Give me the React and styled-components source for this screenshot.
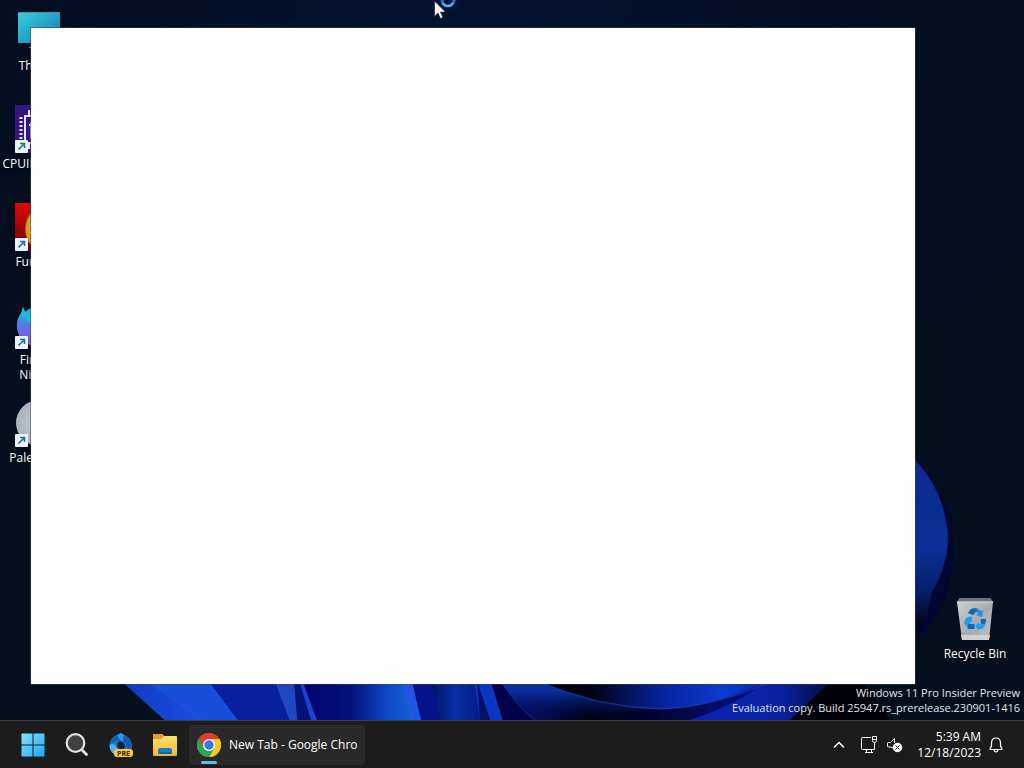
import React from "react";
import styled, { createGlobalStyle } from "styled-components";

const GlobalStyle = createGlobalStyle`
  * {
    box-sizing: border-box;
  }
  body {
    margin: 0;
    overflow: hidden;
    background: #020b1a;
    color: #fff;
    font-family: "Open Sans", "Noto Sans", sans-serif;
    font-size: 12px;
  }
  button {
    font: inherit;
    color: inherit;
    padding: 0;
    border: none;
    background: none;
  }
  svg {
    display: block;
    flex: none;
  }
`;

const StyledScreen = styled.div`
  display: flex;
  flex-direction: column;
  height: 100vh;
`;

const StyledDesktop = styled.main`
  position: relative;
  display: flex;
  flex: 1;
  justify-content: space-between;
  min-height: 0;
  padding: 7px 10px 27px 0;
  overflow: hidden;
  .wallpaper {
    position: absolute;
    inset: 0;
    width: 100%;
    height: 100%;
  }
`;

const StyledShortcuts = styled.div`
  position: relative;
  display: flex;
  flex-direction: column;
  justify-content: ${({ $end }) => ($end ? "flex-end" : "flex-start")};
`;

const StyledShortcut = styled.button`
  display: flex;
  flex-direction: column;
  align-items: center;
  width: 78px;
  height: 98px;
  text-shadow: 0 1px 2px #000;
  .label {
    margin-top: 3px;
    line-height: 15px;
  }
`;

const StyledWindow = styled.section`
  position: absolute;
  inset: 28px 109px 36px 31px;
  background: #fff;
  box-shadow: 0 0 0 1px rgba(60, 64, 72, 0.5);
`;

const StyledWatermark = styled.div`
  position: absolute;
  right: 4px;
  bottom: 5px;
  font-size: 11px;
  line-height: 15px;
  text-align: right;
  color: #e2e5ea;
`;

const StyledPointer = styled.svg`
  position: absolute;
  top: 0;
  left: 434px;
`;

const StyledTaskbar = styled.footer`
  display: flex;
  flex: none;
  align-items: center;
  justify-content: space-between;
  height: 48px;
  padding: 0 21px 0 11px;
  border-top: 1px solid #3b3d42;
  background: #1c1c1c;
`;

const StyledGroup = styled.div`
  display: flex;
  align-items: center;
`;

const StyledTaskButton = styled.button`
  display: flex;
  align-items: center;
  justify-content: center;
  width: 44px;
  height: 40px;
`;

const StyledAppButton = styled.button`
  position: relative;
  display: flex;
  align-items: center;
  gap: 8px;
  width: 176px;
  height: 40px;
  margin-left: 2px;
  padding: 0 8px;
  border-radius: 4px;
  background: #292929;
  .title {
    flex: 1;
    overflow: hidden;
    white-space: nowrap;
    text-align: left;
  }
  &::after {
    content: "";
    position: absolute;
    bottom: 1px;
    left: 12px;
    width: 16px;
    height: 3px;
    border-radius: 2px;
    background: #60b8f0;
  }
`;

const StyledTrayButton = styled.button`
  display: flex;
  align-items: center;
  justify-content: center;
  width: 25px;
  height: 40px;
  margin-right: ${({ $spaced }) => ($spaced ? "6px" : "0")};
`;

const StyledClock = styled.button`
  margin: 0 8px 0 10px;
  line-height: 16px;
  text-align: right;
`;

const Wallpaper = () => (
  <svg
    className="wallpaper"
    viewBox="0 0 1024 720"
    preserveAspectRatio="xMidYMax slice"
    aria-hidden="true"
  >
    <defs>
      <radialGradient id="sky" cx="0.45" cy="0" r="0.8">
        <stop offset="0" stopColor="#031230" />
        <stop offset="0.6" stopColor="#020d20" />
        <stop offset="1" stopColor="#030f1e" />
      </radialGradient>
      <linearGradient id="edge" x1="0" x2="0" y1="0" y2="1">
        <stop offset="0" stopColor="#0a2a8e" />
        <stop offset="0.45" stopColor="#0b2f96" />
        <stop offset="0.62" stopColor="#081f6e" />
        <stop offset="0.76" stopColor="#020620" />
        <stop offset="1" stopColor="#01020e" />
      </linearGradient>
      <linearGradient id="petal" x1="0" x2="1">
        <stop offset="0" stopColor="#1238c4" />
        <stop offset="1" stopColor="#1a50e2" />
      </linearGradient>
      <linearGradient id="glow" x1="0" x2="1">
        <stop offset="0" stopColor="#020272" />
        <stop offset="0.4" stopColor="#04127c" />
        <stop offset="0.7" stopColor="#1048c8" />
        <stop offset="1" stopColor="#166be4" />
      </linearGradient>
      <linearGradient id="mid" x1="0" x2="1">
        <stop offset="0" stopColor="#041064" />
        <stop offset="0.5" stopColor="#0830a6" />
        <stop offset="1" stopColor="#041a86" />
      </linearGradient>
      <linearGradient id="wave" x1="0" x2="1">
        <stop offset="0" stopColor="#000108" />
        <stop offset="0.25" stopColor="#010318" />
        <stop offset="0.55" stopColor="#0723a0" />
        <stop offset="0.8" stopColor="#0b3bd0" />
        <stop offset="1" stopColor="#0726ac" />
      </linearGradient>
      <linearGradient id="under" x1="0" x2="1">
        <stop offset="0" stopColor="#020c5c" />
        <stop offset="0.2" stopColor="#01031c" />
        <stop offset="0.45" stopColor="#01042c" />
        <stop offset="0.7" stopColor="#040c66" />
        <stop offset="1" stopColor="#0518a0" />
      </linearGradient>
      <linearGradient id="curl" x1="0" x2="0" y1="0" y2="1">
        <stop offset="0.3" stopColor="#0a2c9c" />
        <stop offset="1" stopColor="#030c50" stopOpacity="0" />
      </linearGradient>
      <linearGradient id="tail" x1="0" x2="1">
        <stop offset="0" stopColor="#0a24b4" />
        <stop offset="0.6" stopColor="#0a22a0" />
        <stop offset="1" stopColor="#020828" />
      </linearGradient>
    </defs>
    <rect width="1024" height="720" fill="url(#sky)" />
    <path d="M860 430Q930 448 951 520Q962 600 915 642L860 690Z" fill="#010730" />
    <path d="M860 440Q900 448 915 460Q946 492 948 540Q946 570 932 592Q926 625 915 638L860 680Z" fill="url(#edge)" />
    <path d="M120 680L165 720H870L850 680Z" fill="#04117a" />
    <path d="M121 680L165 720H205L146 680Z" fill="url(#petal)" />
    <path d="M146 680L203 720H238L208 680Z" fill="#174fda" />
    <path d="M208 680L238 720H298L292 680Z" fill="#0620a0" />
    <path d="M275 680L290 720H297L294 680Z" fill="#2146c4" />
    <path d="M299 680L311 720H317L302 680Z" fill="#1b43d0" />
    <path d="M303 680L317 720H424L404 680Z" fill="url(#glow)" />
    <path d="M402 680L413 720H421L412 680Z" fill="#1e56e6" />
    <path d="M412 680L421 720H441L430 680Z" fill="#07138c" />
    <path d="M430 680L441 720H480L474 680Z" fill="url(#mid)" />
    <path d="M474 680L480 720H502L490 680Z" fill="#0b36c4" />
    <path d="M477 680L490 720H480Z" fill="#041066" />
    <path d="M490 680L502 720H535L500 680Z" fill="#01024c" />
    <path d="M500 680Q516 705 535 720H700V680Z" fill="#020c5c" />
    <path d="M535 680Q600 708 660 709Q710 708 770 680Z" fill="url(#wave)" />
    <path d="M535 680Q600 708 660 709Q710 708 765 684L790 720H535Z" fill="url(#under)" />
    <path d="M500 680H535Q600 708 660 709Q600 712 540 718Q516 705 500 680Z" fill="url(#curl)" />
    <path d="M765 680Q745 702 690 720H800L840 680Z" fill="url(#tail)" />
    <path d="M832 680L790 720H890L862 680Z" fill="#00020a" />
    <path d="M121 680L165 720M146 680L203 720M275 680L290 720M402 680L413 720M490 680L502 720M500 680Q516 705 535 720M535 680Q600 708 660 709Q710 708 765 684" fill="none" stroke="#3561d4" strokeOpacity="0.5" />
  </svg>
);

const ShortcutArrow = () => (
  <g>
    <rect x="0" y="35" width="13" height="13" rx="1" fill="#eef3f9" />
    <path d="M3.5 44.5L9 39M5 38.5H9.5V43" fill="none" stroke="#17739c" strokeWidth="1.6" />
  </g>
);

const ThisPcIcon = () => (
  <svg width="48" height="48" viewBox="0 0 48 48">
    <defs>
      <linearGradient id="pc" x1="0" x2="1" y1="0" y2="1">
        <stop offset="0" stopColor="#35d0dc" />
        <stop offset="1" stopColor="#1478b8" />
      </linearGradient>
    </defs>
    <rect x="3" y="5" width="42" height="31" rx="1" fill="url(#pc)" />
    <path d="M3.5 5.5H44.5" stroke="#5d8c9a" />
    <path d="M19 36H29V41H14V40H19Z" fill="#87949e" />
  </svg>
);

const CpuIcon = () => (
  <svg width="48" height="48" viewBox="0 0 48 48">
    <rect width="48" height="48" fill="#34157f" />
    <path d="M10 38V11H38V38ZM14 20H34M16 17V33H32V17M14 5V11M20 5V11M27 5V11M34 5V11M14 38V44M20 38V44" fill="none" stroke="#e9e2f5" strokeWidth="2" />
    <path d="M6 12V36M42 12V36" stroke="#e9e2f5" strokeWidth="3" strokeDasharray="2 2" />
    <ShortcutArrow />
  </svg>
);

const FlameIcon = () => (
  <svg width="48" height="48" viewBox="0 0 48 48">
    <defs>
      <linearGradient id="red" x1="0" x2="0" y1="0" y2="1">
        <stop offset="0" stopColor="#e10600" />
        <stop offset="1" stopColor="#650000" />
      </linearGradient>
      <radialGradient id="fur">
        <stop offset="0" stopColor="#ffd84a" />
        <stop offset="1" stopColor="#e08a18" />
      </radialGradient>
    </defs>
    <rect width="48" height="48" fill="url(#red)" />
    <ellipse cx="25" cy="26" rx="15" ry="20" fill="url(#fur)" stroke="#70460e" />
    <ShortcutArrow />
  </svg>
);

const NightlyIcon = () => (
  <svg width="48" height="48" viewBox="0 0 48 48">
    <defs>
      <linearGradient id="night" x1="0" x2="0" y1="0" y2="1">
        <stop offset="0.1" stopColor="#19bce6" />
        <stop offset="0.45" stopColor="#5779e6" />
        <stop offset="1" stopColor="#8a47d8" />
      </linearGradient>
    </defs>
    <path d="M8 6L10 11L16 7L18 10Q24 5 30 7Q47 11 46 27Q43 45 24 46Q4 44 2 27Q1 18 7 11Z" fill="url(#night)" />
    <path d="M6 13L8 6L10 11L16 7L20 24L13 21Q11 16 6 13Z" fill="#20b9de" />
    <ShortcutArrow />
  </svg>
);

const MoonIcon = () => (
  <svg width="48" height="48" viewBox="0 0 48 48">
    <defs>
      <radialGradient id="moon">
        <stop offset="0" stopColor="#c4cbd1" />
        <stop offset="1" stopColor="#a9b3bb" />
      </radialGradient>
    </defs>
    <circle cx="24" cy="24" r="23" fill="url(#moon)" />
    <ShortcutArrow />
  </svg>
);

const BinIcon = () => (
  <svg width="48" height="48" viewBox="0 0 48 48">
    <defs>
      <linearGradient id="bin" x1="0" x2="1" y1="0" y2="1">
        <stop offset="0" stopColor="#d2d3d5" />
        <stop offset="0.55" stopColor="#a8aaae" />
        <stop offset="1" stopColor="#c2c3c5" />
      </linearGradient>
    </defs>
    <path d="M9 3H39L42 7L38 45H11L6 7Z" fill="url(#bin)" />
    <path d="M9 3H39L42 7H6Z" fill="#70757d" />
    <path d="M6 7H42" stroke="#e3e4e5" />
    <path d="M10 40H39L38 45H11Z" fill="#d0d1d3" />
    <path d="M20 14L26 13L30 16L32 15L31 22L25 20L27 18L24 16L22 20L17 18Z" fill="#278fe2" />
    <path d="M15 23L20 21L22 27L20 26L19 29H24V34H17L13 28Z" fill="#249cf2" />
    <path d="M30 24L35 24L34 31L31 34H28V36L24 31L28 27V29H30L29 26Z" fill="#299cf0" />
    <path d="M20 14L24 13L26 16L22 20L17 18ZM17 29H23V34H17ZM30 24H35L34 29H30Z" fill="#1268b4" />
  </svg>
);

const StartIcon = () => (
  <svg width="24" height="24" viewBox="0 0 24 24">
    <defs>
      <linearGradient id="start" x1="0" x2="24" y1="0" y2="24" gradientUnits="userSpaceOnUse">
        <stop offset="0" stopColor="#87e4fc" />
        <stop offset="1" stopColor="#1ba5ef" />
      </linearGradient>
    </defs>
    <path d="M1 0.5H11.5V11.5H0.5V1ZM12.5 0.5H23L23.5 1V11.5H12.5ZM0.5 12.5H11.5V23.5H1L0.5 23ZM12.5 12.5H23.5V23L23 23.5H12.5Z" fill="url(#start)" />
  </svg>
);

const SearchIcon = () => (
  <svg width="24" height="24" viewBox="0 0 24 24" fill="none">
    <circle cx="10.5" cy="10" r="8.8" fill="#414141" stroke="#e4e4e4" strokeWidth="2.2" />
    <path d="M17 17L21.5 21.5" stroke="#e4e4e4" strokeWidth="2.8" strokeLinecap="round" />
  </svg>
);

const PreviewIcon = () => (
  <svg width="24" height="24" viewBox="0 0 24 24">
    <path d="M12 0L20 5Q23 9 23 17L10 23Q1 21 0.500 13Q1 4 8 2Z" fill="#1c78cc" />
    <path d="M12 0L20 5Q23 9 23 17H17Q18 11 13 8Q8 6 4 9L8 2Z" fill="#2d93e4" />
    <path d="M8 2Q2 4 0.500 13Q4 7 12 8Q9 5 8 2Z" fill="#155fb4" />
    <path d="M0.500 13Q1 21 10 23L13 17Q7 17 6 12Q2 9 0.500 13Z" fill="#4cb0f2" />
    <path d="M15 2L20 5Q23 9 23 17H18Q18 11 14 8Z" fill="#1559a4" />
    <path d="M9 9Q12 7 15 10Q17 13 15 16H10Q7 13 9 9Z" fill="#152238" />
    <rect x="5" y="16" width="19" height="8" rx="3" fill="#fbc928" />
    <text x="14.5" y="22.7" textAnchor="middle" fill="#29220a" fontFamily="Open Sans, sans-serif" fontSize="7" fontWeight="700">PRE</text>
  </svg>
);

const FolderIcon = () => (
  <svg width="26" height="24" viewBox="0 0 26 24">
    <defs>
      <linearGradient id="folder" x1="0" x2="0" y1="0" y2="1">
        <stop offset="0" stopColor="#ffe27b" />
        <stop offset="1" stopColor="#f8bd30" />
      </linearGradient>
    </defs>
    <path d="M1 2Q1 1 2 1H10L12 3H24Q25 3 25 4V22H1Z" fill="url(#folder)" />
    <path d="M1 2Q1 1 2 1H10L12 3L9 6H1Z" fill="#dca02b" />
    <path d="M6 22V17Q6 15 8 15H18Q20 15 20 17V22Z" fill="#187fc6" />
    <path d="M8 19H18V22H8Z" fill="#125f9f" />
    <path d="M1 21H25V22Q25 23 24 23H2Q1 23 1 22Z" fill="#e7b538" />
  </svg>
);

const ChromeIcon = () => (
  <svg width="24" height="24" viewBox="0 0 24 24">
    <circle cx="12" cy="12" r="12" fill="#31a350" />
    <path d="M12 12L1.6 6A12 12 0 0 1 22.4 6H12Z" fill="#e33b2e" />
    <path d="M12 6H22.4A12 12 0 0 1 12 24L17.2 15Z" fill="#fbc91c" />
    <path d="M1.6 6L6.8 15L12 12V6H8Z" fill="#e33b2e" />
    <path d="M1.6 6A12 12 0 0 0 12 24L17.2 15L12 12L6.8 15Z" fill="#31a350" />
    <circle cx="12" cy="12" r="6" fill="#fff" />
    <circle cx="12" cy="12" r="4.7" fill="#3878e8" />
  </svg>
);

const ChevronIcon = () => (
  <svg width="12" height="8" viewBox="0 0 12 8">
    <path d="M1 6.5L6 1.5L11 6.5" fill="none" stroke="#fff" strokeWidth="1.5" />
  </svg>
);

const NetworkIcon = () => (
  <svg width="17" height="17" viewBox="0 0 17 17" fill="none" stroke="#fff">
    <path d="M10 1.5H1.5Q0.5 1.5 0.5 2.5V12.5Q0.5 13.5 1.5 13.5H13.5V7M4 16.5H12M5.5 13.5V16M10.5 13.5V16" />
    <path d="M11.5 0.5H15.5V4.5Q15.5 6.5 13.5 6.5Q11.5 6.5 11.5 4.5ZM11.5 3.5H15.5" />
  </svg>
);

const MutedIcon = () => (
  <svg width="16" height="16" viewBox="0 0 16 16" fill="none">
    <path d="M6 11L3.5 10H1.5Q0.5 10 0.5 9V6.5Q0.5 5.5 1.5 5.5H3.5L7.5 1.5V6" stroke="#fff" />
    <circle cx="10.5" cy="10.5" r="4.7" fill="#fff" />
    <path d="M8.5 8.5L12.5 12.5M12.5 8.5L8.5 12.5" stroke="#222" />
  </svg>
);

const BellIcon = () => (
  <svg width="14" height="16" viewBox="0 0 14 16" fill="none" stroke="#fff" strokeWidth="1.2">
    <path d="M7 1Q11.500 1 11.500 6V9L13 12Q13 12.500 12.500 12.500H1.500Q1 12.500 1 12L2.500 9V6Q2.500 1 7 1ZM5 13Q5.500 15 7 15Q8.500 15 9 13" />
  </svg>
);

const shortcuts = [
  { label: "This PC", Icon: ThisPcIcon },
  { label: "CPUID CPU-Z", Icon: CpuIcon },
  { label: "FurMark", Icon: FlameIcon },
  { label: "Firefox Nightly", Icon: NightlyIcon },
  { label: "Pale Moon", Icon: MoonIcon },
];

const Shortcut = ({ label, Icon }) => (
  <StyledShortcut type="button">
    <Icon />
    <span className="label">{label}</span>
  </StyledShortcut>
);

const Taskbar = () => (
  <StyledTaskbar>
    <StyledGroup>
      <StyledTaskButton type="button" aria-label="Start">
        <StartIcon />
      </StyledTaskButton>
      <StyledTaskButton type="button" aria-label="Search">
        <SearchIcon />
      </StyledTaskButton>
      <StyledTaskButton type="button" aria-label="Preview">
        <PreviewIcon />
      </StyledTaskButton>
      <StyledTaskButton type="button" aria-label="File Explorer">
        <FolderIcon />
      </StyledTaskButton>
      <StyledAppButton type="button">
        <ChromeIcon />
        <span className="title">New Tab - Google Chrome</span>
      </StyledAppButton>
    </StyledGroup>
    <StyledGroup>
      <StyledTrayButton type="button" $spaced aria-label="Show hidden icons">
        <ChevronIcon />
      </StyledTrayButton>
      <StyledTrayButton type="button" aria-label="Network">
        <NetworkIcon />
      </StyledTrayButton>
      <StyledTrayButton type="button" aria-label="Volume">
        <MutedIcon />
      </StyledTrayButton>
      <StyledClock type="button">
        5:39 AM
        <br />
        12/18/2023
      </StyledClock>
      <BellIcon />
    </StyledGroup>
  </StyledTaskbar>
);

const App = () => {
  return (
    <StyledScreen>
      <GlobalStyle />
      <StyledDesktop>
        <Wallpaper />
        <StyledShortcuts>
          {shortcuts.map((item) => (
            <Shortcut key={item.label} {...item} />
          ))}
        </StyledShortcuts>
        <StyledShortcuts $end>
          <Shortcut label="Recycle Bin" Icon={BinIcon} />
        </StyledShortcuts>
        <StyledWatermark>
          Windows 11 Pro Insider Preview
          <br />
          Evaluation copy. Build 25947.rs_prerelease.230901-1416
        </StyledWatermark>
        <StyledWindow aria-label="New Tab" />
        <StyledPointer width="24" height="20" viewBox="0 0 24 20" aria-hidden="true">
          <circle cx="14" cy="0" r="6" fill="none" stroke="#2478b8" strokeWidth="3" />
          <path d="M8.5 3A6 6 0 0 0 19 3" fill="none" stroke="#4fb2f0" strokeWidth="2" />
          <path d="M0.5 1V16.5L4 13L6.5 18.5L9 17.5L6.5 12H11.5Z" fill="#fff" stroke="#111" strokeWidth="0.6" />
        </StyledPointer>
      </StyledDesktop>
      <Taskbar />
    </StyledScreen>
  );
};

export default App;
